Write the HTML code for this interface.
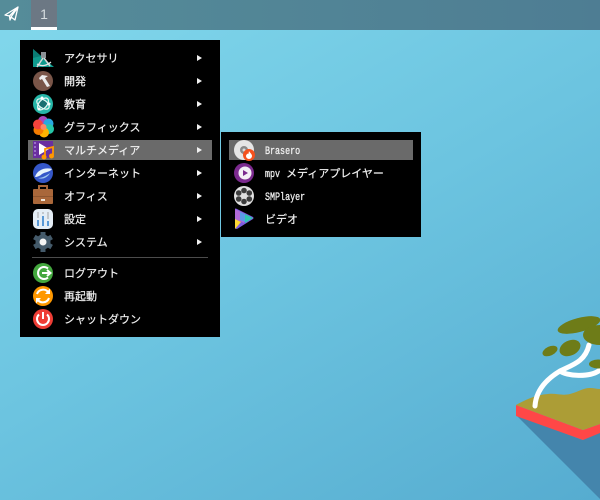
<!DOCTYPE html>
<html><head><meta charset="utf-8"><style>
html,body{margin:0;padding:0}
body{width:600px;height:500px;overflow:hidden;position:relative;font-family:"WenQuanYi Zen Hei Mono","WenQuanYi Zen Hei Sharp","WenQuanYi Zen Hei","Noto Sans CJK JP",monospace;font-size:11px;color:#f0f0f0;background:linear-gradient(150deg,#82d8ec 0%,#6cc4e0 50%,#56acd0 100%)}
.a{position:absolute}
.t{position:absolute;white-space:nowrap;line-height:23px;height:23px;-webkit-text-stroke:.2px #f0f0f0}
.m{font-family:"Liberation Mono",monospace;font-size:11px;display:inline-block;transform:scaleX(.76);transform-origin:0 50%;-webkit-text-stroke:.3px #f0f0f0}
.r{position:absolute;left:197px;width:0;height:0;border-left:5px solid #f0f0f0;border-top:3px solid transparent;border-bottom:3px solid transparent}
svg{position:absolute;left:0;top:0}
</style></head><body>
<svg width="600" height="500" viewBox="0 0 600 500">
<path d="M516 415L600 499V428L583 440Z" fill="#4485ac"/>
<path d="M516 405L583 430L600 424V433L583 440L516 416Z" fill="#ff4747"/>
<path d="M516 405C525 400 535 395 548 394C556 393 562 396 570 394C578 392 583 388 590 388C594 388 597 389 600 389V424L583 430Z" fill="#ac9d36"/>
<path d="M535 406C536 391 545 380 560 371C572 365 585 362 589 345M560 371C566 376 590 378 600 370" stroke="#fff" stroke-width="5" fill="none" stroke-linecap="round"/>
<g fill="#6e7c18">
<ellipse cx="579" cy="325" rx="22" ry="7" transform="rotate(-15 579 325)"/>
<ellipse cx="570" cy="348" rx="11" ry="7.500" transform="rotate(-25 570 348)"/>
<ellipse cx="550" cy="351" rx="8" ry="4.500" transform="rotate(-25 550 351)"/>
<ellipse cx="600" cy="335" rx="17" ry="10"/>
<ellipse cx="598" cy="364" rx="9" ry="4.500"/>
</g>
</svg>
<div class="a" style="left:0;top:0;width:600px;height:30px;background:linear-gradient(90deg,#558c99,#4e7d93)"></div>
<div class="a" style="left:31px;top:0;width:26px;height:27px;background:#6c7884"></div>
<div class="a" style="left:31px;top:27px;width:26px;height:3px;background:#fff"></div>
<div class="a" style="left:31px;top:0;width:26px;height:27px;line-height:28px;text-align:center;font-size:14px;color:#d6dcdf;font-family:'Liberation Sans',sans-serif">1</div>
<svg width="60" height="30"><path d="M5 15L18 7L15 20L11 17L10 20L9.500 16Z M9.500 16L18 7L11 17" fill="none" stroke="#fff" stroke-width="1.300" stroke-linejoin="round"/></svg>

<div class="a" style="left:20px;top:40px;width:200px;height:297px;background:#000"></div>
<div class="a" style="left:28px;top:140px;width:184px;height:20px;background:#6a6a6a"></div>
<div class="a" style="left:32px;top:257px;width:176px;height:1px;background:#4c4c4c"></div>
<div class="a" style="left:221px;top:132px;width:200px;height:105px;background:#000"></div>
<div class="a" style="left:229px;top:140px;width:184px;height:20px;background:#6a6a6a"></div>

<span class="t" style="left:64px;top:47px">アクセサリ</span>
<span class="t" style="left:64px;top:70px">開発</span>
<span class="t" style="left:64px;top:93px">教育</span>
<span class="t" style="left:64px;top:116px">グラフィックス</span>
<span class="t" style="left:64px;top:139px">マルチメディア</span>
<span class="t" style="left:64px;top:162px">インターネット</span>
<span class="t" style="left:64px;top:185px">オフィス</span>
<span class="t" style="left:64px;top:208px">設定</span>
<span class="t" style="left:64px;top:231px">システム</span>
<span class="t" style="left:64px;top:262px">ログアウト</span>
<span class="t" style="left:64px;top:285px">再起動</span>
<span class="t" style="left:64px;top:308px">シャットダウン</span>

<i class="r" style="top:55px"></i><i class="r" style="top:78px"></i><i class="r" style="top:101px"></i><i class="r" style="top:124px"></i><i class="r" style="top:147px"></i><i class="r" style="top:170px"></i><i class="r" style="top:193px"></i><i class="r" style="top:216px"></i><i class="r" style="top:239px"></i>

<span class="t" style="left:265px;top:139px"><span class="m">Brasero</span></span>
<span class="t" style="left:265px;top:162px"><span class="m" style="width:15px">mpv</span><span style="margin-left:6px">メディアプレイヤー</span></span>
<span class="t" style="left:265px;top:185px"><span class="m">SMPlayer</span></span>
<span class="t" style="left:265px;top:208px">ビデオ</span>

<svg width="600" height="500">
<path d="M33 49L54 67H33Z" fill="#0f9b8e"/><path d="M33 58V49L41 56Z" fill="#0b7d75"/>
<rect x="41" y="52" width="5" height="6" fill="#8b9095"/>
<path d="M43 58L37 67M44 58L50 66" stroke="#d8d8d8" stroke-width="1.500" fill="none"/>
<path d="M37 64Q44 68 51 62" stroke="#e8e8e8" stroke-width="1.200" fill="none"/>
<circle cx="43" cy="81" r="10" fill="#795548"/>
<path d="M39 78L42 75L48 76L45 78L50 86L47 87L42 79L40 80Z" fill="#ececec"/>
<circle cx="43" cy="104" r="10" fill="#26b6a8"/>
<circle cx="43" cy="104" r="4" fill="#1a6f72"/>
<ellipse cx="43" cy="104" rx="7" ry="4" fill="none" stroke="#e5f5f3" stroke-width="1.200" transform="rotate(35 43 104)"/>
<ellipse cx="43" cy="104" rx="7" ry="4" fill="none" stroke="#e5f5f3" stroke-width="1.200" transform="rotate(-50 43 104)"/>
<circle cx="49" cy="104" r="1.500" fill="#fff"/><circle cx="42" cy="98" r="1.500" fill="#fff"/><circle cx="39" cy="109" r="1.500" fill="#fff"/>
<circle cx="43" cy="121" r="5" fill="#ab47bc"/>
<circle cx="48.500" cy="123.500" r="5" fill="#29a9e0"/>
<circle cx="49" cy="129" r="5" fill="#26c6a8"/>
<circle cx="44" cy="132.500" r="5" fill="#ffb300"/>
<circle cx="38.500" cy="130" r="5" fill="#f57c00"/>
<circle cx="38" cy="124.500" r="5" fill="#f4433c"/>
<circle cx="43.500" cy="127" r="3" fill="#ff8a65"/>
<rect x="33" y="141" width="20" height="17" fill="#6a2fa0"/>
<path d="M34 142h2v2h-2zM34 146h2v2h-2zM34 150h2v2h-2zM34 154h2v2h-2z" fill="#9a70c8"/>
<path d="M39 143L49 149L39 155Z" fill="#fff"/>
<path d="M45 157V149L53 147V155" stroke="#ff9800" stroke-width="1.800" fill="none"/>
<circle cx="44" cy="157" r="2.500" fill="#ff9800"/><circle cx="51.500" cy="156" r="2.500" fill="#ff9800"/>
<circle cx="43" cy="173" r="10" fill="#3557c9"/>
<path d="M35 177C37 170 45 167 52 169C50 172 45 172 42 174C40 176 37 177 35 177Z" fill="#e8f3fb"/>
<path d="M38 178C42 178 46 176 50 173C48 177 43 180 38 178Z" fill="#9ec7ee"/>
<rect x="33" y="189" width="20" height="15" rx="1" fill="#a9673a"/>
<path d="M39 189V186H47V189" stroke="#a9673a" stroke-width="2" fill="none"/>
<rect x="33" y="196" width="20" height="1" fill="#8e5630"/>
<rect x="41" y="199" width="4" height="2" fill="#f0e6da"/>
<rect x="33" y="209" width="20" height="20" rx="5" fill="#e4edf5"/>
<path d="M38 220V226M43 216V226M48 221V226" stroke="#5a99d6" stroke-width="2"/>
<path d="M38 212V218M43 212V214M48 212V219" stroke="#b8bcc0" stroke-width="1.500"/>
<g fill="#445a6a"><circle cx="43" cy="242" r="7.500"/>
<path d="M40.500 232h5v20h-5z"/><path d="M40.500 232h5v20h-5z" transform="rotate(60 43 242)"/><path d="M40.500 232h5v20h-5z" transform="rotate(120 43 242)"/></g>
<circle cx="43" cy="242" r="3.500" fill="#f4f4f4"/>
<circle cx="43" cy="273" r="10" fill="#43a73e"/>
<path d="M48 268.500A6 6 0 1 0 48 277.500" stroke="#fff" stroke-width="2" fill="none"/>
<path d="M42 273H50M47 270L50.500 273L47 276" stroke="#fff" stroke-width="2" fill="none"/>
<circle cx="43" cy="296" r="10" fill="#ff9800"/>
<path d="M37 294A6.500 6.500 0 0 1 48.500 292.500M49 298A6.500 6.500 0 0 1 37.500 299.500" stroke="#fff" stroke-width="2" fill="none"/>
<path d="M50 288.500V294H45Z M36 303.500V298H41Z" fill="#fff"/>
<circle cx="43" cy="319" r="10" fill="#ee3d35"/>
<path d="M39 314.500A6 6 0 1 0 47 314.500" stroke="#fff" stroke-width="2" fill="none"/>
<path d="M43 312V319" stroke="#fff" stroke-width="2"/>
<circle cx="244" cy="150" r="10" fill="#e6e6e6"/>
<circle cx="244" cy="150" r="4" fill="#8a8a8a"/><circle cx="244" cy="150" r="1.500" fill="#dcdcdc"/>
<circle cx="249" cy="155" r="6" fill="#f4511e"/>
<path d="M249 151C250 153 252 154 252 156A3 3 0 0 1 246 156C246 155 247 154 247.500 153.500C248 154.500 248.500 154.500 249 151Z" fill="#fff"/>
<circle cx="244" cy="173" r="10" fill="#7b2a8e"/>
<circle cx="245" cy="173" r="6.500" fill="#f4eef6"/>
<path d="M243 170L248 173L243 176Z" fill="#7b2a8e"/>
<circle cx="244" cy="196" r="10" fill="#e0e0e0"/>
<g fill="#3d3d3d"><circle cx="244" cy="190.500" r="2.800"/><circle cx="244" cy="201.500" r="2.800"/><circle cx="238.700" cy="193" r="2.800"/><circle cx="249.300" cy="193" r="2.800"/><circle cx="238.700" cy="199" r="2.800"/><circle cx="249.300" cy="199" r="2.800"/></g>
<path d="M235 209Q235 208 237 209L253 217Q254 218 253 219L237 229Q235 229 235 227Z" fill="#7c5ce0"/>
<path d="M235 209L245 214L244 223L235 219Z" fill="#b06ad8"/>
<path d="M245 214L253 218L245 223Z" fill="#2fc7b0"/>
<path d="M240 212L245 214L245 222L240 220Z" fill="#5b9be8"/>
<path d="M235 219L241 222L235 229Z" fill="#fdd835"/>
</svg>
</body></html>
